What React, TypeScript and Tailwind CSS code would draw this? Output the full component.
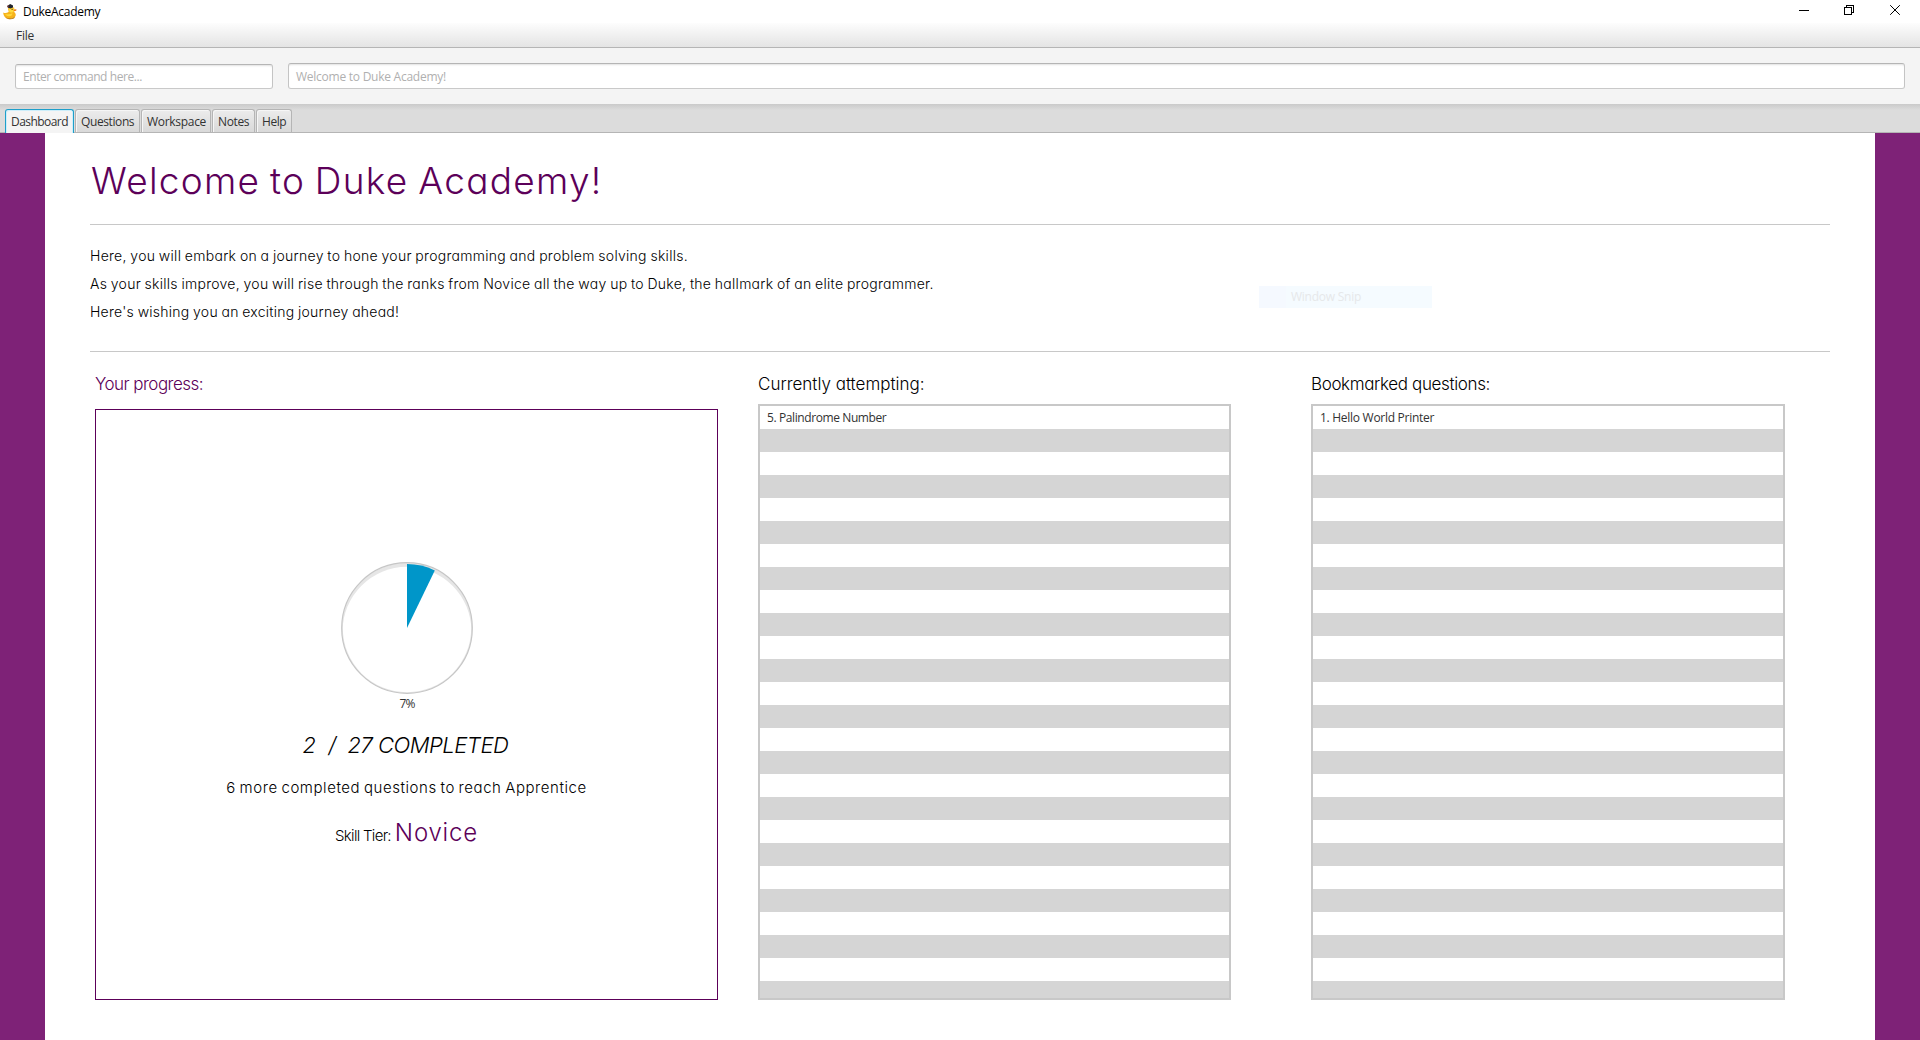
import type { ReactNode } from "react";

const gothic = "font-[Inter,sans-serif] [font-feature-settings:'cv11'] font-light";

function DuckIcon() {
  return (
    <svg width="14" height="16" viewBox="0 0 14 16">
      <path d="M0.2 8.4C1.6 9.2 3.6 9.2 5.2 8.2C6.2 7.6 5.4 6.8 5.2 6V3.6H11.2V8C12.8 9.4 13.2 11 12.2 12.6C11 14.4 9 15 6.8 15C3.4 15 0.4 12.6 0.2 8.4Z" fill="#f6b21b" />
      <path d="M5.6 4.2H10.8V7.4C10 8.6 7.4 8.8 6.4 8Z" fill="#ffdc3c" />
      <path d="M2 9.8C4.4 10.8 7 10.4 9.4 9.2C9.6 11.4 8 12.4 5.8 12.2C4 12 2.8 11.2 2 9.8Z" fill="#ffd83a" />
      <path d="M2.4 13.2C4.8 15 9.4 15.2 12 12.4L11.2 14.2C8.6 15.8 4.6 15.6 2.4 13.2Z" fill="#a8690f" />
      <path d="M10.6 5.6L13.4 5.2L13.2 6.8L10.8 7.2Z" fill="#ef7a1a" />
      <path d="M4.2 2L7.2 0L10 1.4V3.6L7.4 4.4L5 3.8Z" fill="#20242b" />
      <path d="M4.4 1.8L5.6 1.2V3.2H4.4Z" fill="#8c3b3b" />
      <rect x="8.6" y="4.8" width="1" height="1.2" fill="#4b3410" />
    </svg>
  );
}

function WindowButtons() {
  return (
    <div className="ml-auto flex h-full items-start pt-[5px] pr-[20px]" aria-hidden="true">
      <svg width="10" height="10" viewBox="0 0 10 10" className="mr-[35px]" shapeRendering="crispEdges">
        <path d="M0 5.5H10" stroke="#000" />
      </svg>
      <svg width="10" height="10" viewBox="0 0 10 10" className="mr-[36px]" shapeRendering="crispEdges" fill="none" stroke="#000">
        <path d="M0.5 2.5H7.5V9.5H0.5Z" />
        <path d="M2.5 2.5V0.5H9.5V7.5H7.5" />
      </svg>
      <svg width="10" height="10" viewBox="0 0 10 10" fill="none" stroke="#000">
        <path d="M0.2 0.2L9.8 9.8M9.8 0.2L0.2 9.8" />
      </svg>
    </div>
  );
}

const tabs = [
  { label: "Questions", box: "w-[65px] pl-[5px]", text: "tracking-[-0.4px]" },
  { label: "Workspace", box: "w-[70px] pl-[5px]", text: "tracking-[-0.3px]" },
  { label: "Notes", box: "w-[43px] pl-[5px]", text: "tracking-[-0.36px]" },
  { label: "Help", box: "w-[36px] pl-[5px]", text: "tracking-[-0.45px]" },
];

function TabBar() {
  return (
    <div className="flex h-[29px] items-end border-b border-[#b5b5b5] bg-[linear-gradient(to_bottom,#cacaca,#dcdcdc_6px)] pl-[5px] text-[12px] leading-[16px] text-[#323232]">
      <div className="-mb-px mr-px h-[24px] w-[69px] rounded-t-[3px] border border-b-0 border-[#1f9fca] bg-[#f4f4f4] pt-[4px] pl-[5px] tracking-[-0.55px] shadow-[inset_1px_1px_0_#cdeefa,inset_-1px_0_0_#cdeefa]">
        Dashboard
      </div>
      {tabs.map((tab) => (
        <div
          key={tab.label}
          className={`mr-px h-[23px] rounded-t-[3px] border border-b-0 border-[#b5b5b5] bg-gradient-to-b from-[#ececec] to-[#d9d9d9] pt-[4px] shadow-[inset_1px_1px_0_#f6f6f6] ${tab.box} ${tab.text}`}
        >
          {tab.label}
        </div>
      ))}
    </div>
  );
}

const ROWS = 26;

function QuestionList({ title, titleClass, entry, entryClass, width }: { title: string; titleClass: string; entry: string; entryClass: string; width: string }) {
  return (
    <section className={`flex flex-col ${width}`}>
      <h2 className={`${gothic} whitespace-nowrap text-[17px] leading-[20px] text-black ${titleClass}`}>{title}</h2>
      <div className="mt-[10px] h-[596px] overflow-hidden border-2 border-[#c8c8c8] bg-white">
        {Array.from({ length: ROWS }, (_, i) => (
          <div key={i} className="h-[23px] pl-[7px] pt-[4px] text-[12px] leading-[16px] text-[#323232] even:bg-[#d5d5d5]">
            {i === 0 && <span className={entryClass}>{entry}</span>}
          </div>
        ))}
      </div>
    </section>
  );
}

function ProgressPie() {
  return (
    <svg width="132" height="132" viewBox="0 0 132 132">
      <circle cx="66" cy="66" r="65.3" fill="#e6e6e6" stroke="#c6c6c6" strokeWidth="1.2" />
      <clipPath id="dial">
        <circle cx="66" cy="66" r="64.2" />
      </clipPath>
      <circle cx="66" cy="69.2" r="64.4" fill="#fff" clipPath="url(#dial)" />
      <path d="M66 66V2A64 64 0 0 1 93.8 8.4Z" fill="#0096c9" />
    </svg>
  );
}

function Field({ children, className }: { children: ReactNode; className: string }) {
  return (
    <div className={`rounded-[3px] border border-t-[#b5b5b5] border-x-[#c4c4c4] border-b-[#c9c9c9] bg-white pl-[7px] text-[12px] leading-[16px] text-[#b0b0b0] shadow-[inset_0_2px_2px_-1px_#e2e2e2] ${className}`}>
      {children}
    </div>
  );
}

export default function App() {
  return (
    <div className="flex h-[1040px] w-[1920px] flex-col overflow-hidden bg-white font-['Open_Sans',sans-serif]">
      <header className="flex h-[23px] shrink-0 pl-[3px]">
        <div className="pt-[4px]">
          <DuckIcon />
        </div>
        <span className="ml-[6px] mt-[4px] text-[12px] leading-[16px] tracking-[-0.28px] text-black">DukeAcademy</span>
        <WindowButtons />
      </header>
      <nav className="h-[25px] shrink-0 border-b border-[#b5b5b5] bg-gradient-to-b from-[#fdfdfd] to-[#e4e4e4] pl-[16px] pt-[5px] text-[12px] leading-[16px] tracking-[-0.25px] text-[#323232]">
        File
      </nav>
      <div className="flex h-[56px] shrink-0 items-start bg-[#f4f4f4] pl-[15px]">
        <Field className="mt-[16px] h-[25px] w-[258px] pt-[4px] tracking-[-0.43px]">Enter command here...</Field>
        <Field className="ml-[15px] mt-[15px] h-[26px] w-[1617px] pt-[5px] tracking-[-0.25px]">Welcome to Duke Academy!</Field>
      </div>
      <TabBar />
      <main className="flex grow bg-[#7e2277] px-[45px]">
        <div className="relative grow bg-white pl-[45px] pt-[28px]">
          <h1 className={`${gothic} pl-px text-[37px] leading-[40px] tracking-[1.28px] [word-spacing:-2px] text-[#5c0059]`}>Welcome to Duke Academy!</h1>
          <hr className="mt-[23px] w-[1740px] border-t border-[#c8c8c8]" />
          <div className={`${gothic} mt-[17px] text-[14px] leading-[28px] text-black [word-spacing:-0.6px]`}>
            <p className="tracking-[0.28px]">Here, you will embark on a journey to hone your programming and problem solving skills.</p>
            <p className="tracking-[0.27px]">As your skills improve, you will rise through the ranks from Novice all the way up to Duke, the hallmark of an elite programmer.</p>
            <p className="tracking-[0.25px]">Here's wishing you an exciting journey ahead!</p>
          </div>
          <div className="absolute left-[1214px] top-[153px] flex h-[22px] w-[173px] bg-[#f5fbff] text-[12px] leading-[22px] tracking-[-0.25px] text-[#e6e8ea]">
            <div className="w-[27px] bg-[#f5f9ff]" />
            <span className="pl-[5px]">Window Snip</span>
          </div>
          <hr className="mt-[25px] w-[1740px] border-t border-[#c8c8c8]" />
          <div className="mt-[22px] flex pl-[5px]">
            <section className="mr-[40px] w-[623px]">
              <h2 className={`${gothic} text-[17px] leading-[20px] tracking-[-0.53px] text-[#5c0059]`}>Your progress:</h2>
              <div className="mt-[15px] flex h-[591px] flex-col items-center border border-[#5c0059] pt-[152px] text-black">
                <ProgressPie />
                <span className="mt-px pl-px text-[12px] leading-[17px] tracking-[-0.8px] text-[#323232]">7%</span>
                <p className={`${gothic} mt-[19px] flex w-[208px] whitespace-nowrap text-[22px] italic leading-[28px]`}>
                  <span className="w-[26px]">2</span>
                  <span className="w-[19px]">/</span>
                  <span className="tracking-[-0.5px]">27 COMPLETED</span>
                </p>
                <p className={`${gothic} mt-[19px] text-[15px] leading-[20px] tracking-[0.56px] [word-spacing:-1px]`}>6 more completed questions to reach Apprentice</p>
                <p className={`${gothic} mt-[20px] flex items-baseline text-[15px] leading-[30px] tracking-[-0.7px]`}>
                  Skill Tier:
                  <span className="ml-[4px] text-[24px] tracking-[0.8px] text-[#5c0059]">Novice</span>
                </p>
              </div>
            </section>
            <QuestionList title="Currently attempting:" titleClass="tracking-[0px]" entry="5. Palindrome Number" entryClass="tracking-[-0.4px]" width="mr-[80px] w-[473px]" />
            <QuestionList title="Bookmarked questions:" titleClass="tracking-[-0.36px]" entry="1. Hello World Printer" entryClass="tracking-[-0.28px]" width="w-[474px]" />
          </div>
        </div>
      </main>
    </div>
  );
}
